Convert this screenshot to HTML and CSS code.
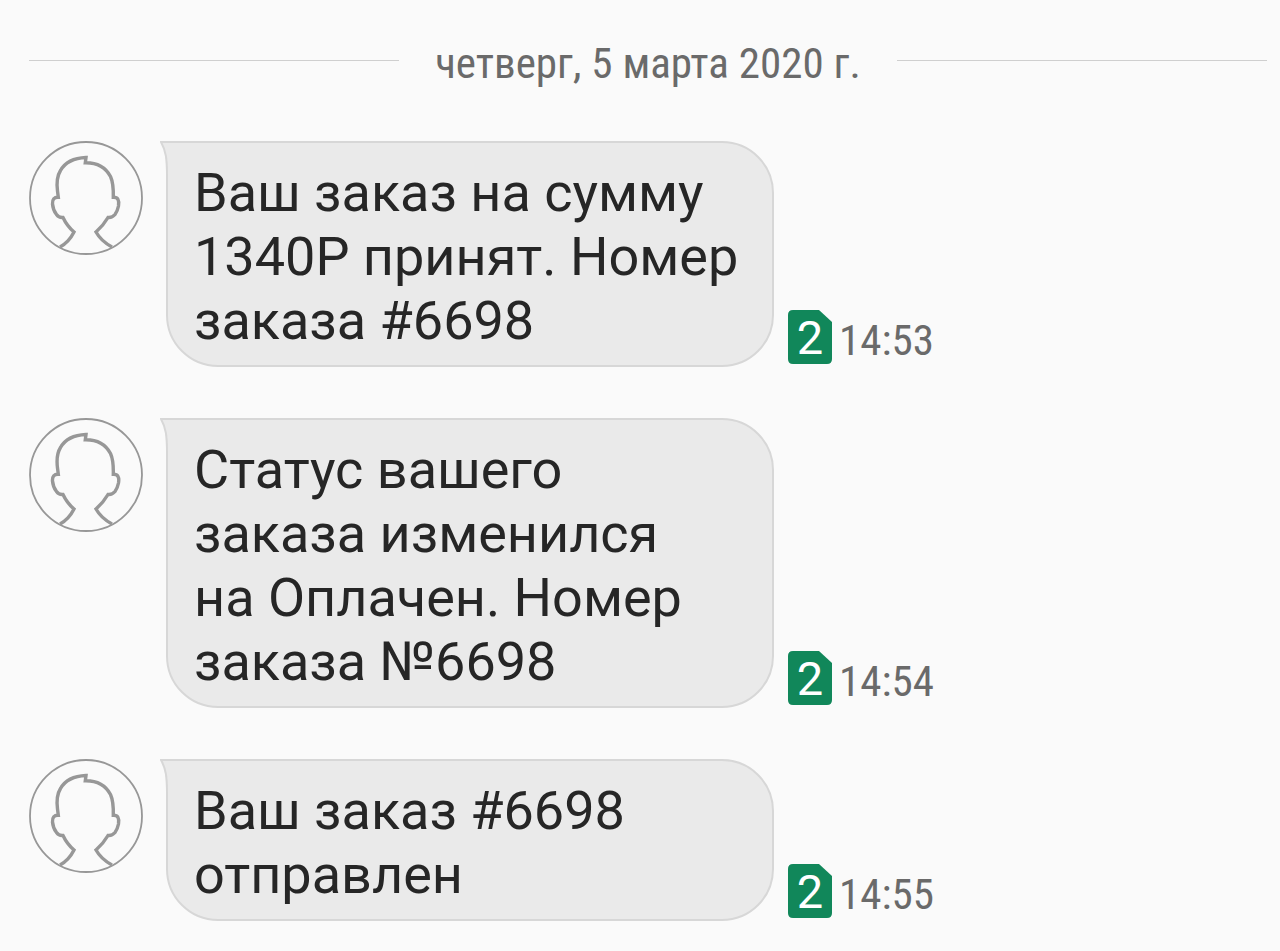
FILE: index.html
```html
<!DOCTYPE html>
<html lang="ru">
<head>
<meta charset="utf-8">
<meta name="viewport" content="width=device-width, initial-scale=1">
<title>Сообщения</title>
<link rel="stylesheet" href="styles.css">
</head>
<body>
<svg class="defs" aria-hidden="true">
  <symbol id="avatar" viewBox="0 0 114 114">
    <circle cx="57" cy="57" r="56" fill="none" stroke="#979797" stroke-width="1.8"/>
    <path d="M31 106Q40 101 45 91Q38 85 34 76.5Q30 77 27.500 73.500Q24 69 23.500 63Q23 56 29.300 56.300L28.500 50C27.500 42 28 35 31.500 29.500C36 21.500 45 17 57 16.500L56.300 21.700C69 21.500 77 27 81.500 35.500C84.500 42 84.500 48 84.300 56.300Q91 56 89.500 65Q88.500 70 86 73.500Q83 77 79 76.500Q74 85 67 91Q72 100 83 106" fill="none" stroke="#979797" stroke-width="3.4"/>
  </symbol>
  <symbol id="tail" viewBox="0 0 12 34">
    <path d="M0 0H12V34H6V30C6 15 5 8 0 0Z" fill="#eaeaea"/>
    <path d="M12 1H1C6 10 7 18 7 34" fill="none" stroke="#d7d7d7" stroke-width="2"/>
  </symbol>
  <symbol id="sim" viewBox="0 0 44 54">
    <path d="M5 0H31L44 12V49Q44 54 39 54H5Q0 54 0 49V5Q0 0 5 0Z" fill="#11875a"/>
  </symbol>
</svg>
<main class="chat">
  <h1 class="date"><span>четверг, 5 марта 2020 г.</span></h1>
  <article class="message">
    <svg class="avatar" aria-hidden="true"><use href="#avatar"/></svg>
    <div class="bubble"><svg class="tail" aria-hidden="true"><use href="#tail"/></svg><p>Ваш заказ на сумму 1340Р принят. Номер заказа #6698</p></div>
    <div class="meta"><span class="sim"><svg class="card" aria-hidden="true"><use href="#sim"/></svg><span class="slot">2</span></span><time>14:53</time></div>
  </article>
  <article class="message">
    <svg class="avatar" aria-hidden="true"><use href="#avatar"/></svg>
    <div class="bubble"><svg class="tail" aria-hidden="true"><use href="#tail"/></svg><p>Статус вашего<br>заказа изменился<br>на Оплачен. Номер заказа №6698</p></div>
    <div class="meta"><span class="sim"><svg class="card" aria-hidden="true"><use href="#sim"/></svg><span class="slot">2</span></span><time>14:54</time></div>
  </article>
  <article class="message">
    <svg class="avatar" aria-hidden="true"><use href="#avatar"/></svg>
    <div class="bubble"><svg class="tail" aria-hidden="true"><use href="#tail"/></svg><p>Ваш заказ #6698 отправлен</p></div>
    <div class="meta"><span class="sim"><svg class="card" aria-hidden="true"><use href="#sim"/></svg><span class="slot">2</span></span><time>14:55</time></div>
  </article>
</main>
</body>
</html>
```
FILE: styles.css
```css
* { box-sizing: border-box; }
body {
  margin: 0;
  background: #fafafa;
  color: #262626;
  font-family: Roboto, sans-serif;
}
.defs { position: absolute; width: 0; height: 0; }
.chat {
  display: flex;
  flex-direction: column;
  gap: 51px;
  padding: 36px 13px 30px 29px;
}
.date {
  display: flex;
  align-items: center;
  gap: 36px;
  margin: 0;
  font-family: "Roboto Condensed", Roboto, sans-serif;
  font-size: 43px;
  font-weight: 400;
  line-height: 54px;
  color: #6a6a6a;
}
.date::before, .date::after {
  content: "";
  flex: 1;
  height: 1px;
  margin-bottom: 6px;
  background: #cfcfcf;
}
.message { display: flex; }
.avatar { flex: none; width: 114px; height: 114px; margin-right: 23px; }
.bubble {
  position: relative;
  width: 608px;
  padding: 18px 28px 12px 26px;
  background: #eaeaea;
  border: 2px solid #d7d7d7;
  border-radius: 0 52px 52px 52px;
}
.bubble p { margin: 0; font-size: 54px; line-height: 64px; }
.tail { position: absolute; top: -2px; left: -8px; width: 12px; height: 34px; }
.meta {
  display: flex;
  align-items: center;
  align-self: flex-end;
  gap: 7px;
  height: 54px;
  margin: 0 0 3px 14px;
}
.sim {
  position: relative;
  display: flex;
  justify-content: center;
  width: 44px;
  height: 54px;
}
.card { position: absolute; inset: 0; width: 44px; height: 54px; }
.slot { position: relative; color: #fff; font-size: 47px; line-height: 56px; }
.meta time {
  padding-top: 5px;
  font-family: "Roboto Condensed", Roboto, sans-serif;
  font-size: 43px;
  line-height: 54px;
  color: #6a6a6a;
}
```
